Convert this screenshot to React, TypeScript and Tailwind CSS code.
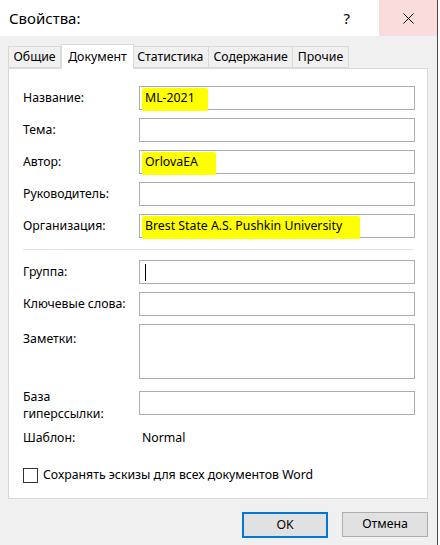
import React from 'react';

const font = { fontFamily: '"Segoe UI", "Noto Sans", "Open Sans", sans-serif' };

interface Row {
  label: string;
  value?: string;
  hl?: string;
}

const topRows: Row[] = [
  { label: 'Название:', value: 'ML-2021', hl: 'w-[66px]' },
  { label: 'Тема:' },
  { label: 'Автор:', value: 'OrlovaEA', hl: 'w-[74px]' },
  { label: 'Руководитель:' },
  { label: 'Организация:', value: 'Brest State A.S. Pushkin University', hl: 'w-[218px]' },
];

const tabs = ['Общие', 'Документ', 'Статистика', 'Содержание', 'Прочие'];

const Field: React.FC<{ row: Row; cursor?: boolean }> = ({ row, cursor }) => (
  <div className="flex h-[24px] items-center">
    <div className="w-[116px] text-[12.3px] text-black">{row.label}</div>
    <div className="relative flex h-[24px] w-[276px] items-center border border-[#acacac] bg-white pl-[2px]">
      {row.value && (
        <span
          className={`absolute left-[2px] top-[1px] h-[23px] rounded-[2px] bg-[#ffff00] ${row.hl}`}
        />
      )}
      {row.value && (
        <span className="relative pl-[3px] text-[12.3px] text-black">{row.value}</span>
      )}
      {cursor && <span className="ml-[3px] h-[17px] w-px bg-black" />}
    </div>
  </div>
);

export default function App() {
  return (
    <div className="flex h-[545px] w-[440px] bg-white" style={font}>
      <div className="flex w-[438px] flex-col border-r border-[#4a4a4a]">
        {/* title bar */}
        <div className="flex h-[36px] items-center bg-white">
          <div className="pl-[9px] text-[15px] text-black">Свойства:</div>
          <div className="ml-auto mr-[29px] text-[15px] text-black">?</div>
          <div className="flex h-[36px] w-[58px] items-center justify-center bg-[#fadcdc]">
            <svg width="11" height="11" viewBox="0 0 11 11">
              <path d="M0.5 0.5 L10.5 10.5 M10.5 0.5 L0.5 10.5" stroke="#000" strokeWidth="1" />
            </svg>
          </div>
        </div>

        {/* body */}
        <div className="flex flex-1 flex-col bg-[#f0f0f0] pl-[8px] pt-[9px]">
          {/* tabs */}
          <div className="flex h-[23px] items-end">
            {tabs.map((t, i) =>
              i === 1 ? (
                <div
                  key={t}
                  className="relative z-10 -mb-px flex h-[25px] items-center border border-b-0 border-[#d9d9d9] bg-white px-[6px] text-[12.3px] text-black"
                >
                  {t}
                </div>
              ) : (
                <div
                  key={t}
                  className={`flex h-[22px] items-center border border-[#d9d9d9] bg-[#f0f0f0] px-[4.5px] text-[12.3px] text-black ${
                    i === 0 ? '' : '-ml-px'
                  } ${i === 2 ? 'border-l-0' : ''}`}
                >
                  {t}
                </div>
              )
            )}
          </div>

          {/* panel */}
          <div className="flex h-[431px] w-[420px] flex-col border border-[#d9d9d9] bg-white pl-[14px] pt-[17px]">
            <div className="flex flex-col gap-[8px]">
              {topRows.map((r) => (
                <Field key={r.label} row={r} />
              ))}
            </div>

            <div className="mt-[11px] h-px w-[391px] bg-[#e3e3e3]" />

            <div className="mt-[10px] flex flex-col gap-[8px]">
              <Field row={{ label: 'Группа:' }} cursor />
              <Field row={{ label: 'Ключевые слова:' }} />
              <div className="flex">
                <div className="w-[116px] pt-[6px] text-[12.3px] text-black">Заметки:</div>
                <div className="h-[55px] w-[276px] border border-[#acacac] bg-white" />
              </div>
            </div>

            <div className="mt-[12px] flex">
              <div className="-mt-[3px] w-[116px] text-[12.3px] leading-[17px] text-black">
                База
                <br />
                гиперссылки:
              </div>
              <div className="h-[24px] w-[276px] border border-[#acacac] bg-white" />
            </div>

            <div className="mt-[7px] flex text-[12.3px] text-black">
              <div className="w-[119px]">Шаблон:</div>
              <div>Normal</div>
            </div>

            <div className="mt-[19px] flex items-center">
              <div className="h-[15px] w-[15px] border border-[#333] bg-white" />
              <span className="ml-[5px] text-[12.3px] text-black">
                Сохранять эскизы для всех документов Word
              </span>
            </div>
          </div>

          {/* buttons */}
          <div className="mt-[13px] flex justify-end gap-[14px] pr-[9px]">
            <div className="flex h-[26px] w-[86px] items-center justify-center border-2 border-[#0078d7] bg-[#e1e1e1] text-[12.3px] text-black">
              OK
            </div>
            <div className="flex h-[25px] w-[86px] items-center justify-center border border-[#adadad] bg-[#e1e1e1] text-[12.3px] text-black">
              Отмена
            </div>
          </div>
        </div>
      </div>
    </div>
  );
}
